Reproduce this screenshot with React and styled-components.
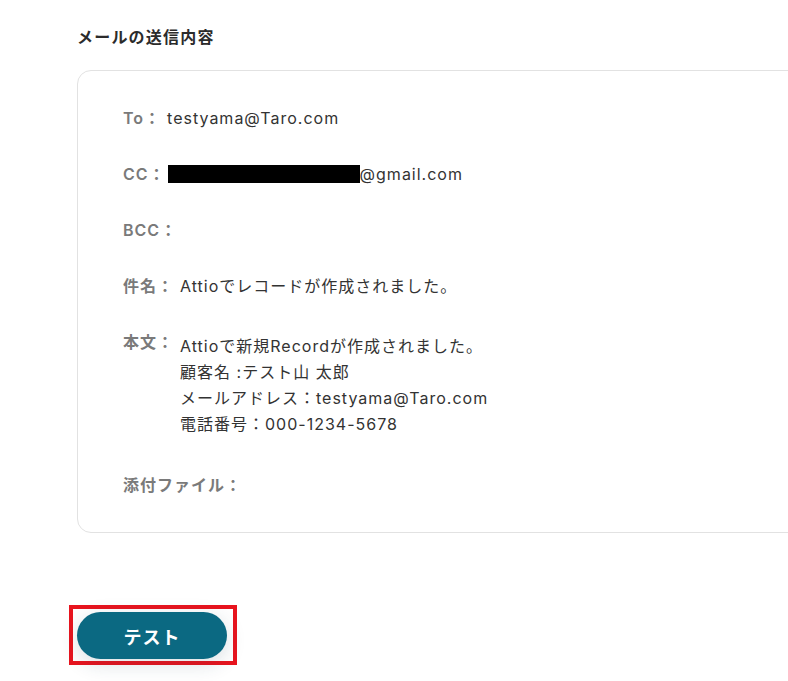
import React from "react";
import styled, { createGlobalStyle } from "styled-components";

const Global = createGlobalStyle`
  html, body { margin: 0; padding: 0; background: #fff; }
  body {
    font-family: Inter, "Noto Sans CJK JP", sans-serif;
    color: #333;
    overflow: hidden;
  }
`;

const Page = styled.div`
  width: 788px;
  height: 681px;
  padding: 25px 0 0 77px;
  box-sizing: border-box;
  display: flex;
  flex-direction: column;
  overflow: hidden;
`;

const Title = styled.h2`
  margin: 0;
  font-size: 16px;
  font-weight: 700;
  line-height: 24px;
  letter-spacing: 1.2px;
  color: #2b2b2b;
`;

const Card = styled.div`
  margin-top: 21px;
  margin-right: -40px;
  height: 463px;
  box-sizing: border-box;
  border: 1px solid #e2e2e2;
  border-radius: 14px;
  padding: 34px 0 0 45px;
  display: flex;
  flex-direction: column;
  gap: 30px;
`;

const Row = styled.div`
  display: flex;
  align-items: flex-start;
  font-size: 16px;
  line-height: 26px;
  letter-spacing: 1px;
`;

const Label = styled.span`
  color: #7a7a7a;
  font-weight: 600;
  white-space: nowrap;
  margin-right: 6px;
`;

const Value = styled.div`
  color: #333;
  padding: ${(p) => (p.$multi ? "4px 0 5px" : "0")};
  white-space: pre-line;
`;

const Redacted = styled.span`
  display: inline-block;
  width: 192px;
  height: 18px;
  margin-left: -4px;
  background: #000;
  vertical-align: -3px;
`;

const ButtonArea = styled.div`
  margin-top: 72px;
  margin-left: -8px;
  width: 168px;
  height: 60px;
  box-sizing: border-box;
  border: 4px solid #e8141e;
  padding: 3px 6px 2px 4px;
  display: flex;
`;

const TestButton = styled.button`
  width: 150px;
  height: 47px;
  border: none;
  border-radius: 24px;
  background: #0b6982;
  color: #fff;
  font-family: Inter, "Noto Sans CJK JP", sans-serif;
  font-size: 18px;
  font-weight: 700;
  letter-spacing: 1px;
  box-shadow: 0 5px 20px rgba(30, 60, 80, 0.16);
  cursor: pointer;
`;

export default function App() {
  return (
    <>
      <Global />
      <Page>
        <Title>メールの送信内容</Title>
        <Card>
          <Row>
            <Label>To：</Label>
            <Value>testyama@Taro.com</Value>
          </Row>
          <Row>
            <Label>CC：</Label>
            <Value>
              <Redacted />@gmail.com
            </Value>
          </Row>
          <Row>
            <Label>BCC：</Label>
            <Value />
          </Row>
          <Row>
            <Label>件名：</Label>
            <Value>Attioでレコードが作成されました。</Value>
          </Row>
          <Row>
            <Label>本文：</Label>
            <Value $multi>
              {"Attioで新規Recordが作成されました。\n顧客名 :テスト山 太郎\nメールアドレス：testyama@Taro.com\n電話番号：000-1234-5678"}
            </Value>
          </Row>
          <Row>
            <Label>添付ファイル：</Label>
            <Value />
          </Row>
        </Card>
        <ButtonArea>
          <TestButton>テスト</TestButton>
        </ButtonArea>
      </Page>
    </>
  );
}
